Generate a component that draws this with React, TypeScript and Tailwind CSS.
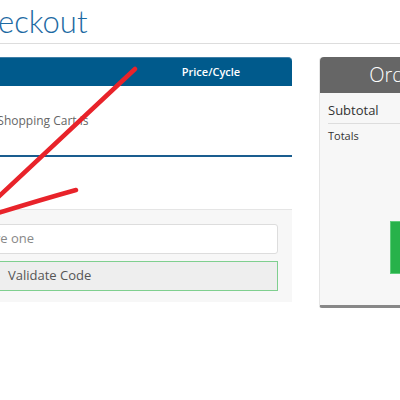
export default function App() {
  return (
    <div className="relative w-[400px] h-[400px] overflow-hidden bg-white font-['Open_Sans',sans-serif]">
      <div className="ml-[-200px] w-[800px]">
        <h1 className="pl-[160px] h-[43px] pt-[2px] text-[31px] leading-[38px] font-light text-[#1d6aa3] font-['Lato',sans-serif]">
          Checkout
        </h1>
        <div className="border-t border-[#dddddd]" />
        <div className="flex gap-[27px] mt-[13px]">
          <div className="w-[492px] shrink-0">
            <div className="flex h-[29px] justify-end bg-[#005a8c] border-t border-[#3f7fa8] rounded-tr-[4px]">
              <div className="w-[162px] flex items-center justify-center text-[11px] font-semibold text-white">
                Price/Cycle
              </div>
            </div>
            <div className="h-[71px] flex items-center pl-[168px] border-b-2 border-[#1a5d8f] text-[12px] text-[#666666]">
              Your Shopping Cart is
            </div>
            <div className="h-[52px]" />
            <div className="bg-[#f7f7f7] border-t border-[#e5e5e5] pt-[14px] pb-[11px] pr-[14px] flex flex-col gap-[7px]">
              <div className="h-[30px] bg-white border border-[#dddddd] rounded-[3px] flex items-center pl-[28px] text-[13px] text-[#888888]">
                Enter promo code if you have one
              </div>
              <div className="h-[30px] bg-[#eeeeee] border border-[#7fcf8f] flex items-center pl-[207px] text-[13px] text-[#555555]">
                Validate Code
              </div>
            </div>
          </div>
          <div className="w-[244px] h-[251px] shrink-0 flex flex-col rounded-t-[4px] rounded-b-[3px] bg-[#f7f7f7] border-l border-[#e5e5e5] border-b-[3px] border-b-[#888888]">
            <div className="h-[36px] bg-[#666666] rounded-tl-[4px] flex items-center justify-center text-[20px] font-light text-white">
              Order Summary
            </div>
            <div className="px-[8px]">
              <div className="h-[31px] pt-[5px] flex items-center border-b border-[#dddddd] text-[13px] text-[#333333]">
                Subtotal
              </div>
              <div className="pt-[4px] text-[11px] text-[#333333]">Totals</div>
              <div className="mt-[76px] ml-[62px] w-[120px] h-[53px] bg-[#27b24a] border border-[#5fcc7a]" />
            </div>
          </div>
        </div>
      </div>
      <svg className="absolute inset-0 pointer-events-none" width="400" height="400">
        <path d="M135 69 L-5 200" stroke="#e8232a" strokeWidth="4.5" strokeLinecap="round" fill="none" />
        <path d="M76 190 Q40 200 -5 214" stroke="#e8232a" strokeWidth="4.5" strokeLinecap="round" fill="none" />
      </svg>
    </div>
  );
}
